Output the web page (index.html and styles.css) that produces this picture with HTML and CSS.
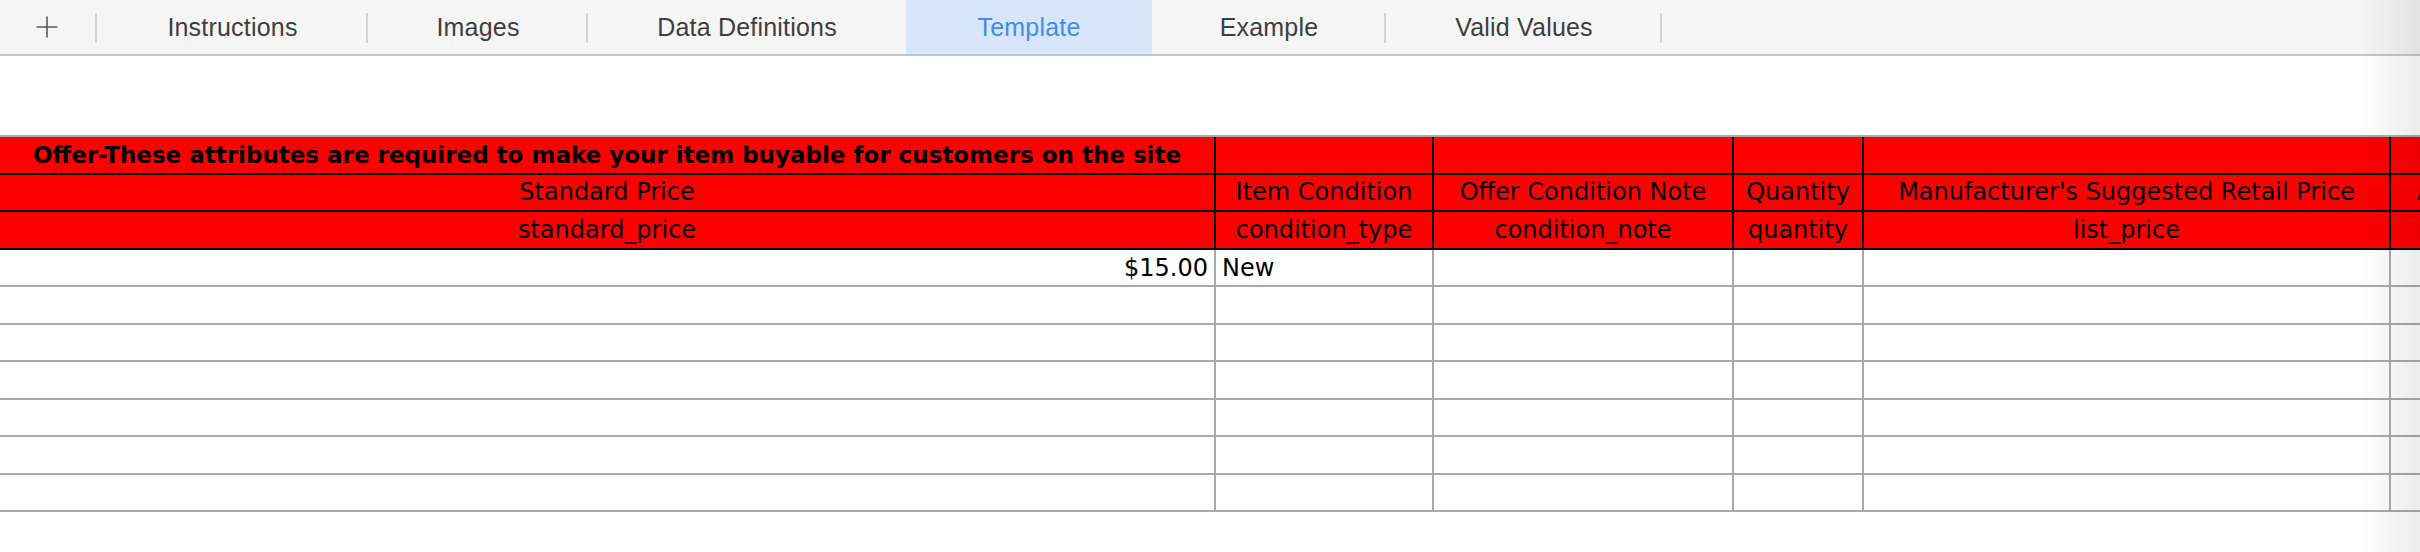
FILE: index.html
```html
<!DOCTYPE html>
<html lang="en">
<head>
<meta charset="utf-8">
<title>Template</title>
<link rel="stylesheet" href="styles.css">
</head>
<body>
<div class="app">
  <nav class="tabs">
    <div class="tab tab-add sep">
      <svg class="plus" width="24" height="24" viewBox="0 0 24 24" aria-hidden="true"><path d="M12 1.5v21M1.5 12h21" stroke="#5a5a5a" stroke-width="1.6" fill="none"/></svg>
    </div>
    <div class="tab tab-instructions sep">Instructions</div>
    <div class="tab tab-images sep">Images</div>
    <div class="tab tab-defs">Data Definitions</div>
    <div class="tab tab-template active">Template</div>
    <div class="tab tab-example sep">Example</div>
    <div class="tab tab-values sep">Valid Values</div>
  </nav>
  <main class="canvas">
    <div class="sheet">
      <div class="cell head group">Offer-These attributes are required to make your item buyable for customers on the site</div>
      <div class="cell head"></div>
      <div class="cell head"></div>
      <div class="cell head"></div>
      <div class="cell head"></div>
      <div class="cell head last"></div>

      <div class="cell head">Standard Price</div>
      <div class="cell head">Item Condition</div>
      <div class="cell head">Offer Condition Note</div>
      <div class="cell head">Quantity</div>
      <div class="cell head">Manufacturer's Suggested Retail Price</div>
      <div class="cell head last clip">Add a Product Tax Code</div>

      <div class="cell head">standard_price</div>
      <div class="cell head">condition_type</div>
      <div class="cell head">condition_note</div>
      <div class="cell head">quantity</div>
      <div class="cell head">list_price</div>
      <div class="cell head last"></div>

      <div class="cell data num">$15.00</div>
      <div class="cell data txt">New</div>
      <div class="cell data"></div>
      <div class="cell data"></div>
      <div class="cell data"></div>
      <div class="cell data last"></div>

      <div class="cell data"></div><div class="cell data"></div><div class="cell data"></div><div class="cell data"></div><div class="cell data"></div><div class="cell data last"></div>
      <div class="cell data"></div><div class="cell data"></div><div class="cell data"></div><div class="cell data"></div><div class="cell data"></div><div class="cell data last"></div>
      <div class="cell data"></div><div class="cell data"></div><div class="cell data"></div><div class="cell data"></div><div class="cell data"></div><div class="cell data last"></div>
      <div class="cell data"></div><div class="cell data"></div><div class="cell data"></div><div class="cell data"></div><div class="cell data"></div><div class="cell data last"></div>
      <div class="cell data"></div><div class="cell data"></div><div class="cell data"></div><div class="cell data"></div><div class="cell data"></div><div class="cell data last"></div>
      <div class="cell data"></div><div class="cell data"></div><div class="cell data"></div><div class="cell data"></div><div class="cell data"></div><div class="cell data last"></div>
    </div>
  </main>
  <div class="edge-shade"></div>
</div>
</body>
</html>
```
FILE: styles.css
```css
html, body {
  margin: 0;
  padding: 0;
  background: #ffffff;
}
body {
  width: 2420px;
  height: 552px;
  overflow: hidden;
}
.app {
  position: relative;
  width: 2420px;
  height: 552px;
  overflow: hidden;
}

/* ---------- sheet tabs ---------- */
.tabs {
  display: flex;
  height: 54px;
  background: #f5f5f5;
  border-bottom: 2px solid #c6c6c6;
  font-family: "Liberation Sans", Arial, sans-serif;
  font-size: 25px;
  letter-spacing: 0.2px;
  color: #3e3e3e;
}
.tab {
  position: relative;
  display: flex;
  align-items: center;
  justify-content: center;
  flex: 0 0 auto;
  white-space: nowrap;
  padding-top: 1px;
  box-sizing: border-box;
}
.sep::after {
  content: "";
  position: absolute;
  right: 0;
  top: 13px;
  width: 2px;
  height: 30px;
  background: #d3d3d3;
}
.tab-add { width: 97px; padding-top: 0; }
.plus { display: block; margin-right: 4px; }
.tab-instructions { width: 271px; }
.tab-images { width: 220px; }
.tab-defs { width: 318px; }
.tab-template { width: 246px; }
.tab-example { width: 234px; }
.tab-values { width: 276px; }
.active {
  background: #d7e6fb;
  color: #418de9;
  border-bottom: 2px solid #b7c5d9;
  margin-bottom: -2px;
}

/* ---------- spreadsheet ---------- */
.canvas {
  padding-top: 79px;
}
.sheet {
  display: grid;
  grid-template-columns: 1216px 218px 300px 130px 527px 1fr;
  grid-auto-rows: 37.5px;
  border-top: 2px solid #aaaaaa;
  font-family: "DejaVu Sans", Verdana, sans-serif;
  font-size: 24px;
  color: #000000;
}
.cell {
  box-sizing: border-box;
  display: flex;
  align-items: center;
  justify-content: center;
  border-right: 2px solid #aaaaaa;
  border-bottom: 2px solid #aaaaaa;
  white-space: nowrap;
  overflow: hidden;
  min-width: 0;
}
.cell.last {
  border-right: none;
}
.head {
  background: #ff0000;
  border-color: #000000;
}
.group {
  font-weight: bold;
  font-size: 23px;
}
.clip {
  justify-content: flex-start;
  padding-left: 26px;
}
.data {
  background: #ffffff;
  padding-top: 1px;
}
.num {
  justify-content: flex-end;
  padding-right: 6px;
}
.txt {
  justify-content: flex-start;
  padding-left: 6px;
}

/* right-edge scroll shade */
.edge-shade {
  position: absolute;
  top: 0;
  right: 0;
  width: 62px;
  height: 100%;
  background: linear-gradient(to right, rgba(0, 0, 0, 0), rgba(0, 0, 0, 0.075));
  pointer-events: none;
}
```
